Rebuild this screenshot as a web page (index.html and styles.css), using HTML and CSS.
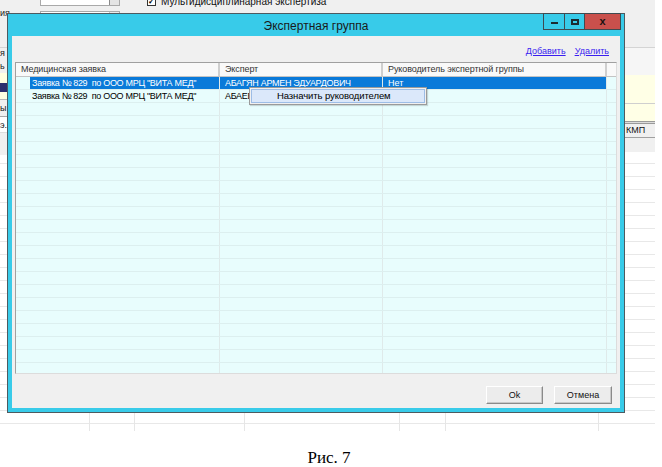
FILE: index.html
```html
<!DOCTYPE html>
<html lang="ru">
<head>
<meta charset="utf-8">
<title>Экспертная группа</title>
<link rel="stylesheet" href="styles.css">
</head>
<body>
<div class="page">
  <div class="shot">
    <div class="app">
      <div class="topbar">
        <div class="tb-labels"><span class="frag">ия</span></div>
        <div class="fields">
          <div class="textbox tb1"><span class="dd"></span></div>
          <div class="textbox tb2"><span class="dd2"></span></div>
        </div>
        <div class="chk"><span class="box">✓</span><span class="chk-label">Мультидисциплинарная экспертиза</span></div>
      </div>
      <div class="workspace">
        <div class="col c1">
          <div class="lband la"><span>я</span><span>ь</span></div>
          <div class="lband lb"></div>
          <div class="lband lc"></div>
          <div class="lband ld"></div>
          <div class="lband le">ы</div>
          <div class="lband lf">э.</div>
          <div class="lband lg"></div>
        </div>
        <div class="col c2"></div>
        <div class="col c3"></div>
        <div class="col c4"></div>
        <div class="col c5"></div>
        <div class="col c6"></div>
        <div class="col c7">
          <div class="rband ra"></div>
          <div class="rband rb"></div>
          <div class="rband rc"></div>
          <div class="rband rd"></div>
          <div class="rband re">КМП</div>
          <div class="rband rf"></div>
        </div>
      </div>
    </div>

    <div class="dialog">
      <div class="titlebar">
        <span></span>
        <span class="title">Экспертная группа</span>
        <div class="capbtns">
          <span class="cb cb-min"><i></i></span>
          <span class="cb cb-max"><i></i></span>
          <span class="cb cb-close">x</span>
        </div>
      </div>
      <div class="client">
        <div class="links"><a href="#">Добавить</a><a href="#">Удалить</a></div>
        <div class="grid">
          <div class="ghead">
            <div class="h h0">Медицинская заявка</div>
            <div class="h h1">Эксперт</div>
            <div class="h h2">Руководитель экспертной группы</div>
            <div class="h h3"></div>
          </div>
          <div class="gbody">
            <div class="row sel"><div class="ind"></div><div class="c0">Заявка № 829&nbsp; по ООО МРЦ "ВИТА МЕД"</div><div class="c1c">АБАГЯН АРМЕН ЭДУАРДОВИЧ</div><div class="c2c">Нет</div><div class="c3c"></div></div>
            <div class="row"><div class="ind"></div><div class="c0">Заявка № 829&nbsp; по ООО МРЦ "ВИТА МЕД"</div><div class="c1c">АБАЕВ ВЛАДИМИР</div><div class="c2c">Нет</div><div class="c3c"></div></div>
            <div class="row"><div class="ind"></div><div class="c0"></div><div class="c1c"></div><div class="c2c"></div><div class="c3c"></div></div>
            <div class="row"><div class="ind"></div><div class="c0"></div><div class="c1c"></div><div class="c2c"></div><div class="c3c"></div></div>
            <div class="row"><div class="ind"></div><div class="c0"></div><div class="c1c"></div><div class="c2c"></div><div class="c3c"></div></div>
            <div class="row"><div class="ind"></div><div class="c0"></div><div class="c1c"></div><div class="c2c"></div><div class="c3c"></div></div>
            <div class="row"><div class="ind"></div><div class="c0"></div><div class="c1c"></div><div class="c2c"></div><div class="c3c"></div></div>
            <div class="row"><div class="ind"></div><div class="c0"></div><div class="c1c"></div><div class="c2c"></div><div class="c3c"></div></div>
            <div class="row"><div class="ind"></div><div class="c0"></div><div class="c1c"></div><div class="c2c"></div><div class="c3c"></div></div>
            <div class="row"><div class="ind"></div><div class="c0"></div><div class="c1c"></div><div class="c2c"></div><div class="c3c"></div></div>
            <div class="row"><div class="ind"></div><div class="c0"></div><div class="c1c"></div><div class="c2c"></div><div class="c3c"></div></div>
            <div class="row"><div class="ind"></div><div class="c0"></div><div class="c1c"></div><div class="c2c"></div><div class="c3c"></div></div>
            <div class="row"><div class="ind"></div><div class="c0"></div><div class="c1c"></div><div class="c2c"></div><div class="c3c"></div></div>
            <div class="row"><div class="ind"></div><div class="c0"></div><div class="c1c"></div><div class="c2c"></div><div class="c3c"></div></div>
            <div class="row"><div class="ind"></div><div class="c0"></div><div class="c1c"></div><div class="c2c"></div><div class="c3c"></div></div>
            <div class="row"><div class="ind"></div><div class="c0"></div><div class="c1c"></div><div class="c2c"></div><div class="c3c"></div></div>
            <div class="row"><div class="ind"></div><div class="c0"></div><div class="c1c"></div><div class="c2c"></div><div class="c3c"></div></div>
            <div class="row"><div class="ind"></div><div class="c0"></div><div class="c1c"></div><div class="c2c"></div><div class="c3c"></div></div>
            <div class="row"><div class="ind"></div><div class="c0"></div><div class="c1c"></div><div class="c2c"></div><div class="c3c"></div></div>
            <div class="row"><div class="ind"></div><div class="c0"></div><div class="c1c"></div><div class="c2c"></div><div class="c3c"></div></div>
            <div class="row"><div class="ind"></div><div class="c0"></div><div class="c1c"></div><div class="c2c"></div><div class="c3c"></div></div>
            <div class="row"><div class="ind"></div><div class="c0"></div><div class="c1c"></div><div class="c2c"></div><div class="c3c"></div></div>
            <div class="row"><div class="ind"></div><div class="c0"></div><div class="c1c"></div><div class="c2c"></div><div class="c3c"></div></div>
          </div>
        </div>
        <div class="footer">
          <button class="btn btn-ok">Ok</button>
          <button class="btn btn-cancel">Отмена</button>
        </div>
      </div>
      <div class="ctxmenu"><div class="ctxitem">Назначить руководителем</div></div>
    </div>
  </div>
  <p class="caption">Рис. 7</p>
</div>
</body>
</html>
```

FILE: styles.css
```css
* { box-sizing: border-box; }
html, body { margin: 0; padding: 0; background: #fff; }
.page { width: 662px; height: 467px; overflow: hidden; background: #fff; }
.shot { position: relative; width: 655px; height: 431px; overflow: hidden; font-family: "Liberation Sans", Arial, sans-serif; font-size: 9px; color: #000; }
.app { width: 655px; height: 431px; display: flex; flex-direction: column; background: #fff; }

/* top bar of background application */
.topbar { height: 48px; flex: none; background: #f0f0f0; border-bottom: 1px solid #d4d4d4; display: flex; align-items: flex-start; }
.tb-labels { width: 40px; padding-top: 8px; line-height: 10px; }
.frag { color: #222; }
.fields { width: 80px; display: flex; flex-direction: column; gap: 5px; margin-top: -8px; }
.textbox { height: 14px; background: #fff; border: 1px solid #a9a9a9; display: flex; justify-content: flex-end; }
.dd { width: 10px; background: #e4e4e4; border-left: 1px solid #8a8a8a; }
.dd2 { width: 10px; background: #ececec; border-left: 1px solid #c8c8c8; }
.chk { margin-left: 27px; margin-top: -4px; display: flex; align-items: center; gap: 5px; line-height: 11px; font-size: 10px; }
.box { width: 9px; height: 9px; border: 1px solid #333; background: #fff; font-size: 8px; line-height: 7px; text-align: center; font-weight: bold; }
.chk-label { color: #111; }

.workspace { flex: 1; display: flex; background: repeating-linear-gradient(to bottom, #fff 0 11px, #e8e8e8 11px 12px, #fff 12px 13px); }
.col { border-right: 1px solid #e6e6e6; display: flex; flex-direction: column; }
.c1 { width: 90px; }
.c2 { width: 45px; }
.c3 { width: 110px; }
.c4 { width: 155px; }
.c5 { width: 46px; }
.c6 { width: 153px; }
.c7 { width: 56px; border-right: none; }
.lband { flex: none; }
.la { height: 25px; background: #f0f0f0; display: flex; flex-direction: column; line-height: 11px; gap: 2px; color: #222; }
.lb { height: 10px; background: #ffffe1; }
.lc { height: 9px; background: #2c2f6e; }
.ld { height: 8px; background: #ffffe1; border-bottom: 1px solid #b8b8b8; }
.le { height: 17px; background: #f0f0f0; border-bottom: 1px solid #a8a8a8; line-height: 16px; color: #111; }
.lf { height: 16px; background: #fff; line-height: 16px; border-bottom: 1px solid #ddd; color: #111; }
.lg { height: 22px; background: #f0f0f0; }
.rband { flex: none; }
.ra { height: 27px; background: #f6f6f6; }
.rb { height: 29px; background: #ffffe6; border-bottom: 1px solid #cfcfcf; }
.rc { height: 17px; background: #ffffe6; }
.rd { height: 3px; background: #dcdcdc; border-top: 1px solid #9a9a9a; border-bottom: 1px solid #9a9a9a; }
.re { height: 14px; background: #f0f0f0; border-bottom: 1px solid #a0a0a0; line-height: 13px; padding-left: 27px; color: #111; }
.rf { height: 14px; background: #f0f0f0; }

/* dialog window */
.dialog { position: absolute; left: 7px; top: 13px; width: 618px; height: 400px; border: 1px solid #4d5a60; background: #38cbe9; padding: 0 4px 4px 4px; display: flex; flex-direction: column; }
.titlebar { height: 22px; flex: none; display: grid; grid-template-columns: 1fr auto 1fr; align-items: center; }
.title { font-size: 12px; color: #1a1a1a; padding-top: 2px; }
.capbtns { justify-self: end; align-self: start; margin-top: -1px; margin-right: -1px; display: flex; }
.cb { height: 17px; border: 1px solid #3f4a50; display: flex; align-items: center; justify-content: center; }
.cb + .cb { border-left: none; }
.cb-min { width: 22px; background: #38cbe9; }
.cb-min i { display: block; width: 7px; height: 2px; background: #1c2a30; margin-top: 3px; }
.cb-max { width: 20px; background: #38cbe9; }
.cb-max i { display: block; width: 8px; height: 6px; border: 2px solid #1c2a30; }
.cb-close { width: 36px; background: #c9504c; color: #1a1010; font-weight: bold; font-size: 11px; line-height: 11px; }

.client { flex: 1; background: #f0f0f0; display: flex; flex-direction: column; padding: 0 3px; }
.links { height: 26px; flex: none; display: flex; justify-content: flex-end; gap: 9px; padding: 10px 8px 0 0; line-height: 11px; }
.links a { color: #3a1ef0; text-decoration: underline; }

.grid { height: 312px; flex: none; border: 1px solid #a0a0a0; border-right-color: #dcdcdc; border-bottom-color: #dcdcdc; background: #e8fdfd; overflow: hidden; display: flex; flex-direction: column; }
.ghead { height: 14px; flex: none; display: flex; background: #f9f9f9; border-bottom: 1px solid #c4c4c4; color: #333; line-height: 13px; }
.h { border-right: 2px solid #cfcfcf; padding-left: 5px; white-space: nowrap; overflow: hidden; letter-spacing: -0.1px; }
.h0 { width: 204px; }
.h1 { width: 163px; }
.h2 { width: 224px; }
.h3 { flex: 1; border-right: none; }
.gbody { flex: 1; overflow: hidden; }
.row { height: 13px; display: flex; border-bottom: 1px solid #dcefef; line-height: 12px; white-space: nowrap; }
.row > div { overflow: hidden; }
.ind { width: 14px; }
.c0 { width: 190px; padding-left: 2px; border-right: 1px solid #dfeaea; letter-spacing: -0.3px; }
.c1c { width: 163px; padding-left: 5px; border-right: 1px solid #dfeaea; letter-spacing: -0.3px; }
.c2c { width: 224px; padding-left: 5px; border-right: 1px solid #dfeaea; }
.c3c { flex: 1; }
.row.sel .c0, .row.sel .c1c, .row.sel .c2c { background: #0a7ad9; color: #fff; }

.footer { flex: 1; display: flex; justify-content: flex-end; align-items: flex-start; gap: 11px; padding: 12px 5px 0 0; }
.btn { height: 18px; padding: 0; font-family: inherit; font-size: 9px; color: #111; background: #ececec; border: 1px solid; border-color: #fff #8a8a8a #8a8a8a #fff; box-shadow: inset -1px -1px 0 #c8c8c8; }
.btn-ok { width: 57px; }
.btn-cancel { width: 58px; }

.ctxmenu { position: absolute; left: 241px; top: 73px; width: 178px; height: 18px; background: #f0f0f0; border: 1px solid #9a9a9a; padding: 1px; box-shadow: 1px 1px 1px rgba(0,0,0,0.15); }
.ctxitem { height: 14px; background: #dbe8fa; border: 1px solid #9dbde6; padding-left: 25px; line-height: 12px; color: #000; font-size: 9.5px; letter-spacing: -0.1px; }

.caption { margin: 18px 0 0; text-align: center; font-family: "Liberation Serif", "Times New Roman", serif; font-size: 17px; line-height: 18px; color: #000; padding-right: 4px; }
```
